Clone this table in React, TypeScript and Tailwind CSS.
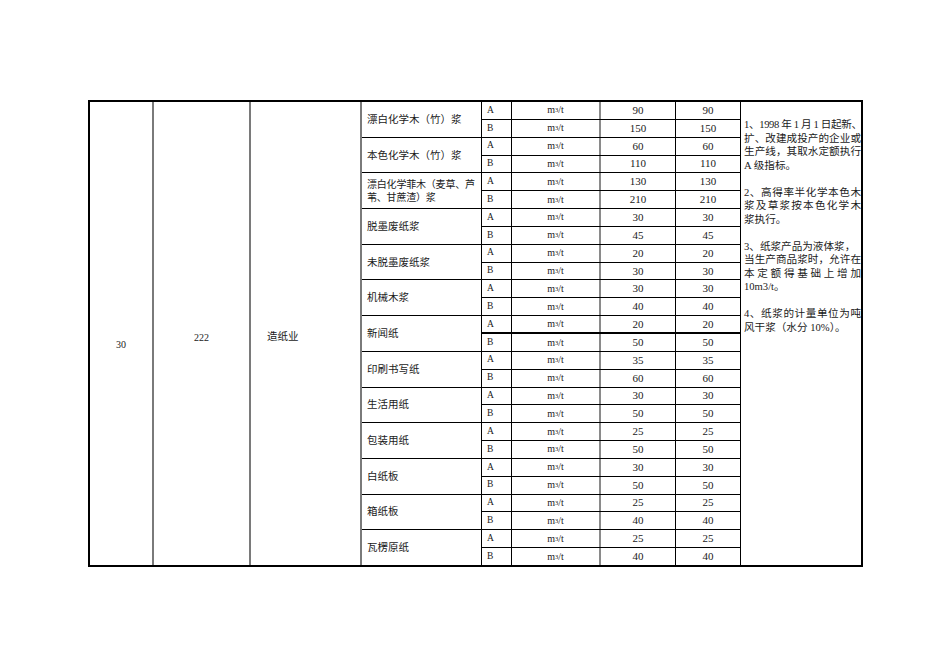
import React from 'react';

type Product = {
  name: string[];
  a: number;
  b: number;
  thick?: boolean;
};

const products: Product[] = [
  { name: ['漂白化学木（竹）浆'], a: 90, b: 150 },
  { name: ['本色化学木（竹）浆'], a: 60, b: 110 },
  { name: ['漂白化学菲木（麦草、芦', '苇、甘蔗渣）浆'], a: 130, b: 210 },
  { name: ['脱墨废纸浆'], a: 30, b: 45 },
  { name: ['未脱墨废纸浆'], a: 20, b: 30 },
  { name: ['机械木浆'], a: 30, b: 40 },
  { name: ['新闻纸'], a: 20, b: 50, thick: true },
  { name: ['印刷书写纸'], a: 35, b: 60 },
  { name: ['生活用纸'], a: 30, b: 50 },
  { name: ['包装用纸'], a: 25, b: 50 },
  { name: ['白纸板'], a: 30, b: 50 },
  { name: ['箱纸板'], a: 25, b: 40 },
  { name: ['瓦楞原纸'], a: 25, b: 40 },
];

// one line of the notes column; full lines are spread to the column width
const Line = ({ text, full }: { text: string; full?: boolean }) => (
  <div className={full ? 'text-justify [text-align-last:justify]' : 'whitespace-nowrap'}>{text}</div>
);

const Unit = () => (
  <span>
    m<span className="text-[6.5px] align-[1px]">3</span>/t
  </span>
);

const SubRow = ({ grade, value, line }: { grade: string; value: number; line?: string }) => (
  <div className={`flex-1 min-h-0 flex ${line ?? ''}`}>
    <div className="w-[30px] border-r border-black flex items-center pl-[5px] text-[9.5px] leading-none">{grade}</div>
    <div className="w-[89px] border-r-2 border-[#8a8a8a] flex items-center justify-center text-[10px] leading-none">
      <Unit />
    </div>
    <div className="w-[75px] border-r border-black flex items-center justify-center text-[11px] leading-none">{value}</div>
    <div className="flex-1 flex items-center justify-center text-[11px] leading-none">{value}</div>
  </div>
);

export default function App() {
  return (
    <div
      lang="zh-CN"
      className="min-h-screen bg-white pt-[100px] pl-[88px] text-[#1a1a1a] font-['Liberation_Serif','Noto_Sans_CJK_SC',serif]"
    >
      <div className="flex w-[775px] h-[467px] border-2 border-black">
        {/* 序号 */}
        <div className="w-[64px] border-r-2 border-[#7a7a7a] flex items-center justify-center pt-[21px] text-[10px]">
          30
        </div>
        {/* 代码 */}
        <div className="w-[97px] border-r-2 border-[#7a7a7a] flex items-center justify-center pt-[7px] text-[10px]">
          222
        </div>
        {/* 行业 */}
        <div className="w-[111px] border-r-2 border-[#7a7a7a] flex items-center pl-[16px] pt-[7px] text-[10.5px]">
          造纸业
        </div>

        {/* Products */}
        <div className="w-[378px] flex flex-col">
          {products.map((p, i) => (
            <div
              key={p.name[0]}
              className={`flex-1 min-h-0 flex ${i < products.length - 1 ? 'border-b border-black' : ''}`}
            >
              <div
                className={`w-[120px] border-r border-black flex flex-col justify-center pl-[5px] leading-[13px] ${
                  p.name.length > 1 ? 'text-[10px] tracking-[-0.2px]' : 'text-[10.5px]'
                }`}
              >
                {p.name.map((n) => (
                  <div key={n} className="whitespace-nowrap">{n}</div>
                ))}
              </div>
              <div className="flex-1 flex flex-col">
                <SubRow
                  grade="A"
                  value={p.a}
                  line={p.thick ? 'border-b-2 border-black' : 'border-b border-black'}
                />
                <SubRow grade="B" value={p.b} />
              </div>
            </div>
          ))}
        </div>

        {/* Notes */}
        <div className="flex-1 border-l border-black pl-[3px] pt-[16px] text-[10.6px] leading-[13.5px]">
          <div className="w-[117px]">
            <div className="whitespace-nowrap tracking-[-0.35px]">1、1998 年 1 月 1 日起新、</div>
            <Line text="扩、改建成投产的企业或" full />
            <Line text="生产线，其取水定额执行" full />
            <Line text="A 级指标。" />

            <div className="mt-[13.5px]">
              <Line text="2、高得率半化学本色木" full />
              <Line text="浆及草浆按本色化学木" full />
              <Line text="浆执行。" />
            </div>

            <div className="mt-[13.5px]">
              <Line text="3、纸浆产品为液体浆，" />
              <Line text="当生产商品浆时，允许在" full />
              <Line text="本定额得基础上增加" full />
              <Line text="10m3/t。" />
            </div>

            <div className="mt-[13.5px]">
              <Line text="4、纸浆的计量单位为吨" full />
              <Line text="风干浆（水分 10%）。" />
            </div>
          </div>
        </div>
      </div>
    </div>
  );
}
